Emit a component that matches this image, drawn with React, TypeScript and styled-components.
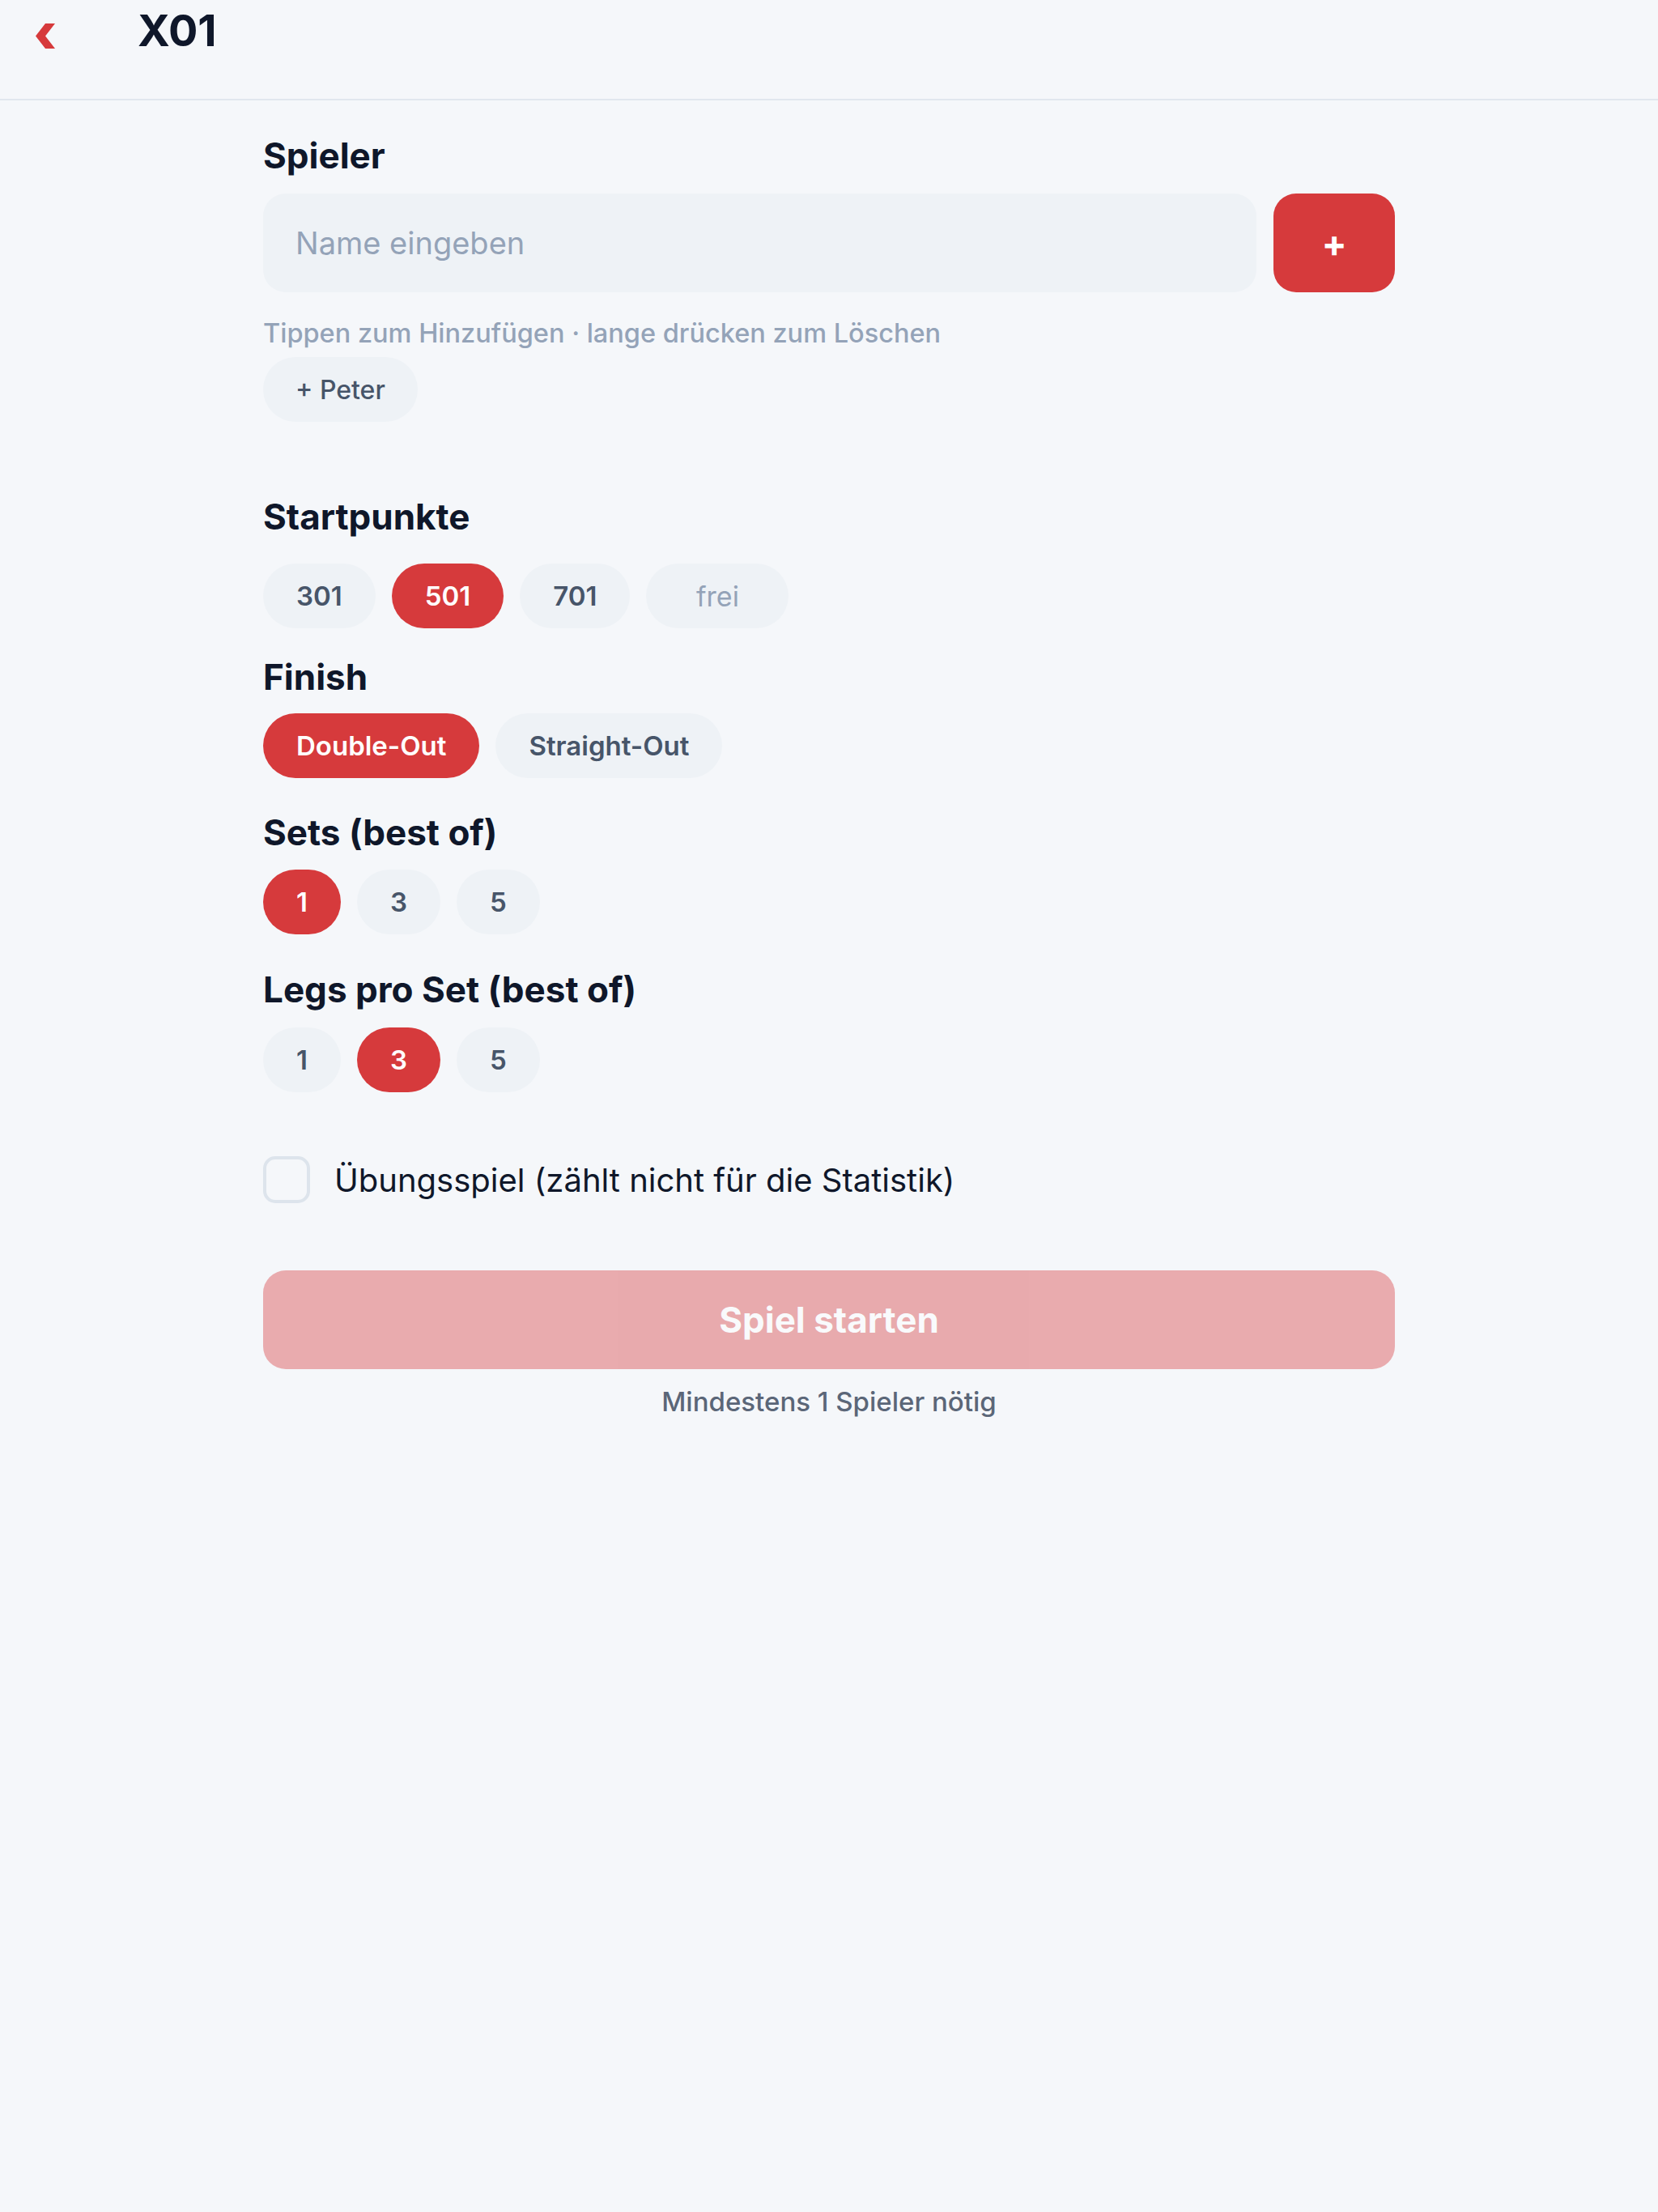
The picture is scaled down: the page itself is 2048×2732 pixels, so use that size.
import styled, { createGlobalStyle } from "styled-components";
import { useState } from "react";

const GlobalStyle = createGlobalStyle`
  html, body {
    margin: 0;
    padding: 0;
    background: #f5f7fa;
  }
  body {
    font-family: Inter, "Noto Sans", sans-serif;
    color: #0f172a;
    -webkit-font-smoothing: antialiased;
  }
  * {
    box-sizing: border-box;
  }
`;

const Page = styled.div`
  min-height: 2732px;
  background: #f5f7fa;
`;

const Header = styled.header`
  height: 124px;
  border-bottom: 2px solid #e1e7ee;
  display: flex;
  align-items: flex-start;
  padding: 3px 0 0 44px;
`;

const BackButton = styled.button`
  border: none;
  background: none;
  padding: 0;
  margin-top: 26px;
  display: flex;
  cursor: pointer;
`;

const Title = styled.h1`
  margin: 2px 0 0 102px;
  font-size: 54px;
  font-weight: 700;
  line-height: normal;
  color: #0f172a;
`;

const Main = styled.main`
  max-width: 1398px;
  margin: 0 auto;
  padding-top: 42px;
`;

const Section = styled.section<{ $top?: number }>`
  margin-top: ${(p) => p.$top ?? 0}px;
`;

const Heading = styled.h2<{ $after: number }>`
  margin: 0 0 ${(p) => p.$after}px;
  font-size: 44px;
  font-weight: 700;
  line-height: 52px;
  color: #0f172a;
`;

const InputRow = styled.div`
  display: flex;
  gap: 21px;
`;

const NameInput = styled.input`
  flex: 1;
  height: 122px;
  border: none;
  border-radius: 28px;
  background: #eef2f6;
  padding: 0 40px;
  font-family: inherit;
  font-size: 38px;
  color: #0f172a;
  outline: none;

  &::placeholder {
    color: #94a3b8;
  }
`;

const AddButton = styled.button`
  width: 150px;
  height: 122px;
  border: none;
  border-radius: 28px;
  background: #d63a3c;
  color: #fff;
  font-family: inherit;
  font-size: 46px;
  font-weight: 700;
  line-height: 1;
  cursor: pointer;
`;

const Hint = styled.p`
  margin: 31px 0 0;
  font-size: 32.5px;
  font-weight: 500;
  line-height: 40px;
  color: #94a3b8;
`;

const ChipRow = styled.div`
  display: flex;
  gap: 20px;
  margin-top: 9px;
`;

const Chip = styled.button`
  height: 80px;
  padding: 0 40px;
  border: none;
  border-radius: 40px;
  background: #eef2f6;
  color: #475569;
  font-family: inherit;
  font-size: 32px;
  font-weight: 500;
  cursor: pointer;
`;

const PillRow = styled.div`
  display: flex;
  gap: 20px;
`;

const Pill = styled.button<{ $active?: boolean }>`
  height: 80px;
  padding: 0 41px;
  border: none;
  border-radius: 40px;
  background: ${(p) => (p.$active ? "#d63a3c" : "#eef2f6")};
  color: ${(p) => (p.$active ? "#ffffff" : "#475569")};
  font-family: inherit;
  font-size: 33px;
  font-weight: 600;
  cursor: pointer;
`;

const FreeInput = styled.input`
  width: 176px;
  height: 80px;
  border: none;
  border-radius: 40px;
  background: #eef2f6;
  text-align: center;
  font-family: inherit;
  font-size: 34px;
  color: #475569;
  outline: none;

  &::placeholder {
    color: #94a3b8;
  }
`;

const CheckRow = styled.label`
  display: flex;
  align-items: center;
  gap: 30px;
  margin-top: 79px;
  cursor: pointer;
`;

const CheckBox = styled.span<{ $checked: boolean }>`
  width: 58px;
  height: 58px;
  border-radius: 15px;
  border: 4px solid ${(p) => (p.$checked ? "#d63a3c" : "#dde4ec")};
  background: ${(p) => (p.$checked ? "#d63a3c" : "transparent")};
`;

const CheckLabel = styled.span`
  font-size: 40px;
  color: #0f172a;
`;

const StartButton = styled.button`
  width: 100%;
  height: 122px;
  margin-top: 83px;
  border: none;
  border-radius: 28px;
  background: #d63a3c;
  color: #fff;
  font-family: inherit;
  font-size: 44px;
  font-weight: 700;

  &:disabled {
    opacity: 0.4;
  }
`;

const Caption = styled.p`
  margin: 18px 0 0;
  text-align: center;
  font-size: 33px;
  font-weight: 500;
  line-height: 44px;
  color: #5b6678;
`;

function Chevron() {
  return (
    <svg width="24" height="31" viewBox="0 0 24 31">
      <polygon points="12,0 24,0 12,15.5 24,31 12,31 0,15.5" fill="#d63a3c" />
    </svg>
  );
}

export default function App() {
  const [start, setStart] = useState<number>(501);
  const [finish, setFinish] = useState<string>("Double-Out");
  const [sets, setSets] = useState<number>(1);
  const [legs, setLegs] = useState<number>(3);
  const [practice, setPractice] = useState<boolean>(false);
  const [players] = useState<string[]>([]);

  return (
    <Page>
      <GlobalStyle />
      <Header>
        <BackButton aria-label="Zurück">
          <Chevron />
        </BackButton>
        <Title>X01</Title>
      </Header>
      <Main>
        <Section>
          <Heading $after={21}>Spieler</Heading>
          <InputRow>
            <NameInput placeholder="Name eingeben" />
            <AddButton>+</AddButton>
          </InputRow>
          <Hint>Tippen zum Hinzufügen · lange drücken zum Löschen</Hint>
          <ChipRow>
            <Chip>+ Peter</Chip>
          </ChipRow>
        </Section>

        <Section $top={91}>
          <Heading $after={32}>Startpunkte</Heading>
          <PillRow>
            {[301, 501, 701].map((value) => (
              <Pill
                key={value}
                $active={start === value}
                onClick={() => setStart(value)}
              >
                {value}
              </Pill>
            ))}
            <FreeInput placeholder="frei" />
          </PillRow>
        </Section>

        <Section $top={34}>
          <Heading $after={19}>Finish</Heading>
          <PillRow>
            {["Double-Out", "Straight-Out"].map((value) => (
              <Pill
                key={value}
                $active={finish === value}
                onClick={() => setFinish(value)}
              >
                {value}
              </Pill>
            ))}
          </PillRow>
        </Section>

        <Section $top={41}>
          <Heading $after={20}>Sets (best of)</Heading>
          <PillRow>
            {[1, 3, 5].map((value) => (
              <Pill
                key={value}
                $active={sets === value}
                onClick={() => setSets(value)}
              >
                {value}
              </Pill>
            ))}
          </PillRow>
        </Section>

        <Section $top={42}>
          <Heading $after={21}>Legs pro Set (best of)</Heading>
          <PillRow>
            {[1, 3, 5].map((value) => (
              <Pill
                key={value}
                $active={legs === value}
                onClick={() => setLegs(value)}
              >
                {value}
              </Pill>
            ))}
          </PillRow>
        </Section>

        <CheckRow onClick={() => setPractice((prev) => !prev)}>
          <CheckBox $checked={practice} />
          <CheckLabel>Übungsspiel (zählt nicht für die Statistik)</CheckLabel>
        </CheckRow>

        <StartButton disabled={players.length === 0}>Spiel starten</StartButton>
        <Caption>Mindestens 1 Spieler nötig</Caption>
      </Main>
    </Page>
  );
}
